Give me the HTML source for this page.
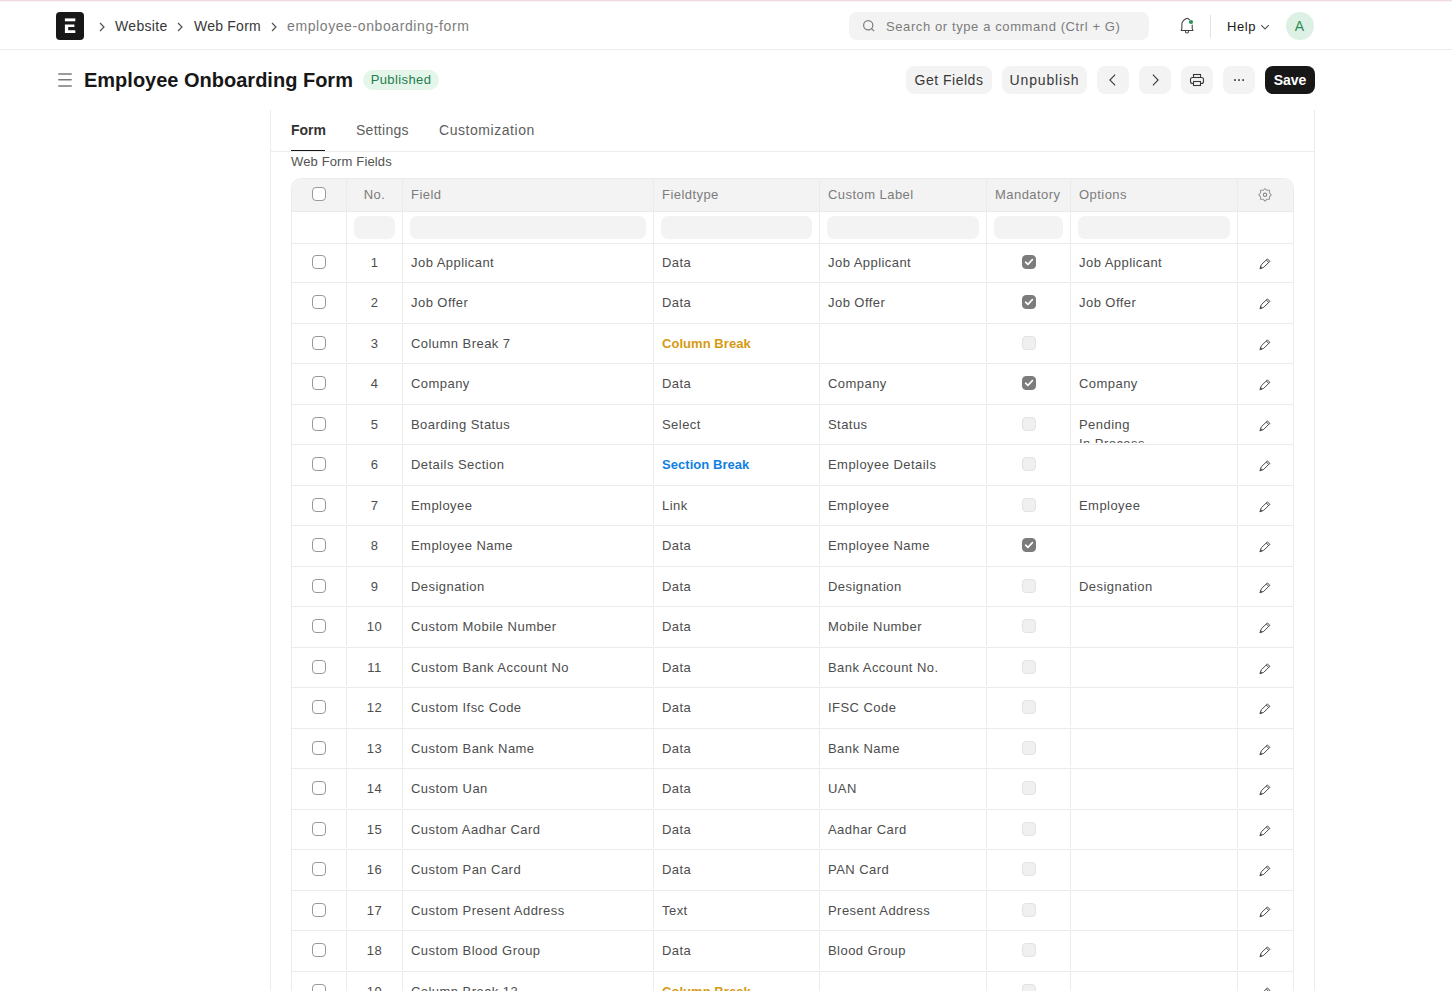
<!DOCTYPE html>
<html><head><meta charset="utf-8"><title>Employee Onboarding Form</title>
<style>
*{box-sizing:border-box;margin:0;padding:0}
html,body{width:1452px;height:991px;overflow:hidden;background:#fff}
body{font-family:"Liberation Sans",sans-serif;color:#383838;position:relative}
.abs{position:absolute}
.topline{position:absolute;left:0;top:0;width:1452px;height:1px;background:#f0dadd}
.topline2{position:absolute;left:0;top:1px;width:1452px;height:1px;background:#fbf4f5}
.navbar{position:absolute;left:0;top:0;width:1452px;height:50px;border-bottom:1px solid #ececec}
.logo{position:absolute;left:56px;top:12px;width:28px;height:28px;background:#171717;border-radius:4px}
.bc{position:absolute;top:17px;font-size:14px;line-height:18px;white-space:nowrap}
.chev{position:absolute}
.search{position:absolute;left:849px;top:12px;width:300px;height:28px;background:#f3f3f3;border-radius:8px}
.search .ph{position:absolute;left:37px;top:7px;font-size:13px;letter-spacing:0.6px;line-height:16px;color:#7c7c7c;white-space:nowrap}
.help{position:absolute;left:1227px;top:18px;font-size:13px;line-height:18px;color:#171717;letter-spacing:0.6px}
.avatar{position:absolute;left:1286px;top:12px;width:28px;height:28px;border-radius:50%;background:#dcf1e3;color:#2e8b57;font-size:14px;line-height:28px;text-align:center;padding-right:1px}
.vdiv{position:absolute;left:1210px;top:15px;width:1px;height:23px;background:#e2e2e2}

.title{position:absolute;left:84px;top:68px;font-size:20px;line-height:24px;font-weight:bold;color:#171717;white-space:nowrap}
.badge{position:absolute;left:363px;top:70px;width:76px;height:20px;border-radius:10px;background:#e4f5e9;color:#1f7d4f;font-size:13px;letter-spacing:0.4px;line-height:20px;text-align:center}
.btn{position:absolute;top:66px;height:28px;border-radius:8px;background:#f3f3f3;color:#383838;font-size:14px;line-height:28px;text-align:center;white-space:nowrap}
.btn.dark{background:#171717;color:#fff;font-weight:bold}

.card{position:absolute;left:270px;top:110px;width:1045px;height:900px;border-left:1px solid #ececec;border-right:1px solid #ececec}
.tabs{position:absolute;left:271px;top:110px;width:1043px;height:42px;border-bottom:1px solid #ececec}
.tab{position:absolute;top:121px;font-size:14px;line-height:18px;color:#5e5e5e;white-space:nowrap}
.tab.active{color:#333;font-weight:bold}
.uline{position:absolute;left:291px;top:150px;width:34px;height:1px;background:#171717}
.secl{position:absolute;left:291px;top:154px;font-size:13px;line-height:16px;color:#525252;white-space:nowrap}

.grid{position:absolute;left:291px;top:178px;width:1003px;border:1px solid #ebebeb;border-radius:10px 10px 0 0;border-bottom:none;}
.ghead{display:flex;height:33px;background:#f3f3f3;border-bottom:1px solid #ebebeb;border-radius:9px 9px 0 0}
.gfilt{display:flex;height:32px;border-bottom:1px solid #ebebeb}
.row{display:flex;border-bottom:1px solid #ebebeb}
.c{position:relative;border-right:1px solid #ebebeb;font-size:13px;letter-spacing:0.45px;white-space:nowrap;overflow:hidden;padding-left:8px}
.c8{border-right:none}
.c1{width:55px}.c2{width:56px}.c3{width:251px}.c4{width:166px}.c5{width:167px}.c6{width:84px}.c7{width:167px}.c8{width:55px}
.ghead .c{color:#7c7c7c;line-height:31px}
.row .c{padding-top:10px;line-height:19px;color:#4d4d4d;height:calc(100% - 1px)}
.num{text-align:center;padding-left:0 !important}
.mid{padding-left:0 !important;text-align:center}
.chk{position:absolute;left:20px;top:12px;width:14px;height:14px;border:1px solid #999;border-radius:4px;background:#fff}
.mchk{position:absolute;left:35px;top:12px;width:14px;height:14px;border-radius:4px;background:#f0f0f0;border:1px solid #e2e2e2}
.mchk.on{background:#7c7c7c;border-color:#7c7c7c}
.mchk svg{position:absolute;left:-1px;top:-1px}
.c8 svg{position:absolute;left:20px;top:13px}
.first .c{padding-top:9px}.first .chk,.first .mchk{top:11px}.first .c8 svg{top:12px}
.cb{color:#d69a12;font-weight:bold;letter-spacing:0.05px}
.sb{color:#0f7fe3;font-weight:bold;letter-spacing:0.05px}
.fin{position:absolute;top:4px;height:23px;border-radius:7px;background:#f3f3f3}

</style></head>
<body>
<div class="navbar"></div>
<div class="topline"></div><div class="topline2"></div>
<div class="logo">
 <svg width="28" height="28" viewBox="0 0 28 28"><rect x="8.9" y="6.4" width="10.4" height="2.9" fill="#fff"/><path d="M8.9 12.4 H18.4 V15.1 H12.2 V18.2 H19.3 V21.1 H8.9 Z" fill="#fff"/></svg>
</div>
<svg class="chev" style="left:98px;top:21px" width="8" height="12" viewBox="0 0 8 12"><path d="M2 2 L6 6 L2 10" fill="none" stroke="#525252" stroke-width="1.2"/></svg>
<div class="bc" style="left:115px;color:#383838;letter-spacing:0.33px">Website</div>
<svg class="chev" style="left:176px;top:21px" width="8" height="12" viewBox="0 0 8 12"><path d="M2 2 L6 6 L2 10" fill="none" stroke="#525252" stroke-width="1.2"/></svg>
<div class="bc" style="left:194px;color:#383838;letter-spacing:0.23px">Web Form</div>
<svg class="chev" style="left:270px;top:21px" width="8" height="12" viewBox="0 0 8 12"><path d="M2 2 L6 6 L2 10" fill="none" stroke="#525252" stroke-width="1.2"/></svg>
<div class="bc" style="left:287px;color:#7c7c7c;letter-spacing:0.6px">employee-onboarding-form</div>

<div class="search">
 <svg style="position:absolute;left:13px;top:7px" width="14" height="14" viewBox="0 0 14 14"><circle cx="6.2" cy="6.2" r="4.6" fill="none" stroke="#7c7c7c" stroke-width="1.2"/><path d="M9.6 9.6 L12.2 12.2" stroke="#7c7c7c" stroke-width="1.2"/></svg>
 <div class="ph">Search or type a command (Ctrl + G)</div>
</div>
<svg style="position:absolute;left:1176px;top:14px" width="24" height="24" viewBox="0 0 24 24"><path d="M5.9 14.4 V9.8 C5.9 8.4 6.6 7.2 7.7 6.3 L10 4.7 C10.7 4.2 11.5 4.2 12.2 4.7 L13.5 5.6 M16.2 11 V14.4 M5.9 14.4 L5.2 16.4 H16.9 L16.2 14.4" fill="none" stroke="#404040" stroke-width="1.05" stroke-linejoin="round" stroke-linecap="round"/><path d="M9.4 16.9 C9.4 19.6 12.6 19.6 12.6 16.9" fill="none" stroke="#404040" stroke-width="1.05"/><circle cx="15" cy="8" r="2.1" fill="#2a9158"/></svg>
<div class="vdiv"></div>
<div class="help">Help</div>
<svg style="position:absolute;left:1260px;top:22px" width="10" height="8" viewBox="0 0 10 8"><path d="M1.2 3.2 L5 7 L8.8 3.2" fill="none" stroke="#555" stroke-width="1.1"/></svg>
<div class="avatar">A</div>

<svg style="position:absolute;left:52px;top:66px" width="28" height="28" viewBox="0 0 28 28"><path d="M6.8 7.9 H19.2 M6.8 13.85 H19.2 M6.8 19.9 H19.2" stroke="#7a7a7a" stroke-width="1.5" stroke-linecap="round"/></svg>
<div class="title">Employee Onboarding Form</div>
<div class="badge">Published</div>

<div class="btn" style="left:906px;width:86px;letter-spacing:0.5px">Get Fields</div>
<div class="btn" style="left:1002px;width:85px;letter-spacing:0.85px">Unpublish</div>
<div class="btn" style="left:1097px;width:32px"><svg style="position:absolute;left:0;top:0" width="32" height="28" viewBox="0 0 32 28"><path d="M18.1 8.7 L12.9 14 L18.1 19.3" fill="none" stroke="#383838" stroke-width="1.1"/></svg></div>
<div class="btn" style="left:1139px;width:32px"><svg style="position:absolute;left:0;top:0" width="32" height="28" viewBox="0 0 32 28"><path d="M13.9 8.7 L19.1 14 L13.9 19.3" fill="none" stroke="#383838" stroke-width="1.1"/></svg></div>
<div class="btn" style="left:1181px;width:32px"><svg style="position:absolute;left:8px;top:7px" width="16" height="14" viewBox="0 0 16 14"><rect x="4.5" y="1.5" width="7" height="3" fill="none" stroke="#383838" stroke-width="1.1"/><rect x="1.5" y="4.5" width="13" height="6" rx="2" fill="none" stroke="#383838" stroke-width="1.1"/><rect x="4.5" y="8.5" width="7" height="4" fill="#f3f3f3" stroke="#383838" stroke-width="1.1"/></svg></div>
<div class="btn" style="left:1223px;width:32px"><svg style="position:absolute;left:9px;top:12px" width="14" height="4" viewBox="0 0 14 4"><rect x="2.1" y="1.2" width="1.7" height="1.7" fill="#383838"/><rect x="6.2" y="1.2" width="1.7" height="1.7" fill="#383838"/><rect x="10.3" y="1.2" width="1.7" height="1.7" fill="#383838"/></svg></div>
<div class="btn dark" style="left:1265px;width:50px">Save</div>

<div class="card"></div>
<div class="tabs"></div>
<div class="tab active" style="left:291px">Form</div>
<div class="tab" style="left:356px;letter-spacing:0.28px">Settings</div>
<div class="tab" style="left:439px;letter-spacing:0.55px">Customization</div>
<div class="uline"></div>
<div class="secl" style="letter-spacing:0.14px">Web Form Fields</div>

<div class="grid">
 <div class="ghead">
  <div class="c c1"><span class="chk" style="top:8px"></span></div>
  <div class="c c2 num">No.</div>
  <div class="c c3">Field</div>
  <div class="c c4">Fieldtype</div>
  <div class="c c5">Custom Label</div>
  <div class="c c6">Mandatory</div>
  <div class="c c7">Options</div>
  <div class="c c8 mid"><svg style="position:absolute;left:20px;top:9px" width="14" height="14" viewBox="0 0 14 14"><path d="M7.00 0.50 L8.80 2.30 L11.50 2.30 L11.50 5.00 L13.30 6.80 L11.50 8.60 L11.50 11.30 L8.80 11.30 L7.00 13.10 L5.20 11.30 L2.50 11.30 L2.50 8.60 L0.70 6.80 L2.50 5.00 L2.50 2.30 L5.20 2.30Z" fill="none" stroke="#999" stroke-width="1.05" stroke-linejoin="round"/><circle cx="7.0" cy="6.8" r="1.7" fill="none" stroke="#8a8a8a" stroke-width="1.1"/></svg></div>
 </div>
 <div class="gfilt">
  <div class="c c1"></div>
  <div class="c c2"><div class="fin" style="left:7px;right:7px"></div></div>
  <div class="c c3"><div class="fin" style="left:7px;right:7px"></div></div>
  <div class="c c4"><div class="fin" style="left:7px;right:7px"></div></div>
  <div class="c c5"><div class="fin" style="left:7px;right:7px"></div></div>
  <div class="c c6"><div class="fin" style="left:7px;right:7px"></div></div>
  <div class="c c7"><div class="fin" style="left:7px;right:7px"></div></div>
  <div class="c c8"></div>
 </div>
<div class="row first" style="height:39px">
<div class="c c1"><span class="chk"></span></div>
<div class="c c2 num">1</div>
<div class="c c3">Job Applicant</div>
<div class="c c4">Data</div>
<div class="c c5">Job Applicant</div>
<div class="c c6 mid"><span class="mchk on"><svg width="14" height="14" viewBox="0 0 14 14"><path d="M3.6 7.2 L5.9 9.4 L10.4 4.6" fill="none" stroke="#fff" stroke-width="1.6" stroke-linecap="round" stroke-linejoin="round"/></svg></span></div>
<div class="c c7">Job Applicant</div>
<div class="c c8 mid"><svg width="14" height="14" viewBox="0 0 14 14"><path d="M1.9 12.8 L3.3 8.8 L9.4 2.9 L11.8 5.3 L5.8 11.3 Z M8.3 4 L10.7 6.4" fill="none" stroke="#4a4a4a" stroke-width="1" stroke-linejoin="round"/><path d="M1.9 12.8 L2.6 10.3 L4.4 12.1 Z" fill="#4a4a4a"/></svg></div>
</div>
<div class="row" style="height:41px">
<div class="c c1"><span class="chk"></span></div>
<div class="c c2 num">2</div>
<div class="c c3">Job Offer</div>
<div class="c c4">Data</div>
<div class="c c5">Job Offer</div>
<div class="c c6 mid"><span class="mchk on"><svg width="14" height="14" viewBox="0 0 14 14"><path d="M3.6 7.2 L5.9 9.4 L10.4 4.6" fill="none" stroke="#fff" stroke-width="1.6" stroke-linecap="round" stroke-linejoin="round"/></svg></span></div>
<div class="c c7">Job Offer</div>
<div class="c c8 mid"><svg width="14" height="14" viewBox="0 0 14 14"><path d="M1.9 12.8 L3.3 8.8 L9.4 2.9 L11.8 5.3 L5.8 11.3 Z M8.3 4 L10.7 6.4" fill="none" stroke="#4a4a4a" stroke-width="1" stroke-linejoin="round"/><path d="M1.9 12.8 L2.6 10.3 L4.4 12.1 Z" fill="#4a4a4a"/></svg></div>
</div>
<div class="row" style="height:40px">
<div class="c c1"><span class="chk"></span></div>
<div class="c c2 num">3</div>
<div class="c c3">Column Break 7</div>
<div class="c c4"><span class="cb">Column Break</span></div>
<div class="c c5"></div>
<div class="c c6 mid"><span class="mchk"></span></div>
<div class="c c7"></div>
<div class="c c8 mid"><svg width="14" height="14" viewBox="0 0 14 14"><path d="M1.9 12.8 L3.3 8.8 L9.4 2.9 L11.8 5.3 L5.8 11.3 Z M8.3 4 L10.7 6.4" fill="none" stroke="#4a4a4a" stroke-width="1" stroke-linejoin="round"/><path d="M1.9 12.8 L2.6 10.3 L4.4 12.1 Z" fill="#4a4a4a"/></svg></div>
</div>
<div class="row" style="height:41px">
<div class="c c1"><span class="chk"></span></div>
<div class="c c2 num">4</div>
<div class="c c3">Company</div>
<div class="c c4">Data</div>
<div class="c c5">Company</div>
<div class="c c6 mid"><span class="mchk on"><svg width="14" height="14" viewBox="0 0 14 14"><path d="M3.6 7.2 L5.9 9.4 L10.4 4.6" fill="none" stroke="#fff" stroke-width="1.6" stroke-linecap="round" stroke-linejoin="round"/></svg></span></div>
<div class="c c7">Company</div>
<div class="c c8 mid"><svg width="14" height="14" viewBox="0 0 14 14"><path d="M1.9 12.8 L3.3 8.8 L9.4 2.9 L11.8 5.3 L5.8 11.3 Z M8.3 4 L10.7 6.4" fill="none" stroke="#4a4a4a" stroke-width="1" stroke-linejoin="round"/><path d="M1.9 12.8 L2.6 10.3 L4.4 12.1 Z" fill="#4a4a4a"/></svg></div>
</div>
<div class="row" style="height:40px">
<div class="c c1"><span class="chk"></span></div>
<div class="c c2 num">5</div>
<div class="c c3">Boarding Status</div>
<div class="c c4">Select</div>
<div class="c c5">Status</div>
<div class="c c6 mid"><span class="mchk"></span></div>
<div class="c c7">Pending<br>In Process</div>
<div class="c c8 mid"><svg width="14" height="14" viewBox="0 0 14 14"><path d="M1.9 12.8 L3.3 8.8 L9.4 2.9 L11.8 5.3 L5.8 11.3 Z M8.3 4 L10.7 6.4" fill="none" stroke="#4a4a4a" stroke-width="1" stroke-linejoin="round"/><path d="M1.9 12.8 L2.6 10.3 L4.4 12.1 Z" fill="#4a4a4a"/></svg></div>
</div>
<div class="row" style="height:41px">
<div class="c c1"><span class="chk"></span></div>
<div class="c c2 num">6</div>
<div class="c c3">Details Section</div>
<div class="c c4"><span class="sb">Section Break</span></div>
<div class="c c5">Employee Details</div>
<div class="c c6 mid"><span class="mchk"></span></div>
<div class="c c7"></div>
<div class="c c8 mid"><svg width="14" height="14" viewBox="0 0 14 14"><path d="M1.9 12.8 L3.3 8.8 L9.4 2.9 L11.8 5.3 L5.8 11.3 Z M8.3 4 L10.7 6.4" fill="none" stroke="#4a4a4a" stroke-width="1" stroke-linejoin="round"/><path d="M1.9 12.8 L2.6 10.3 L4.4 12.1 Z" fill="#4a4a4a"/></svg></div>
</div>
<div class="row" style="height:40px">
<div class="c c1"><span class="chk"></span></div>
<div class="c c2 num">7</div>
<div class="c c3">Employee</div>
<div class="c c4">Link</div>
<div class="c c5">Employee</div>
<div class="c c6 mid"><span class="mchk"></span></div>
<div class="c c7">Employee</div>
<div class="c c8 mid"><svg width="14" height="14" viewBox="0 0 14 14"><path d="M1.9 12.8 L3.3 8.8 L9.4 2.9 L11.8 5.3 L5.8 11.3 Z M8.3 4 L10.7 6.4" fill="none" stroke="#4a4a4a" stroke-width="1" stroke-linejoin="round"/><path d="M1.9 12.8 L2.6 10.3 L4.4 12.1 Z" fill="#4a4a4a"/></svg></div>
</div>
<div class="row" style="height:41px">
<div class="c c1"><span class="chk"></span></div>
<div class="c c2 num">8</div>
<div class="c c3">Employee Name</div>
<div class="c c4">Data</div>
<div class="c c5">Employee Name</div>
<div class="c c6 mid"><span class="mchk on"><svg width="14" height="14" viewBox="0 0 14 14"><path d="M3.6 7.2 L5.9 9.4 L10.4 4.6" fill="none" stroke="#fff" stroke-width="1.6" stroke-linecap="round" stroke-linejoin="round"/></svg></span></div>
<div class="c c7"></div>
<div class="c c8 mid"><svg width="14" height="14" viewBox="0 0 14 14"><path d="M1.9 12.8 L3.3 8.8 L9.4 2.9 L11.8 5.3 L5.8 11.3 Z M8.3 4 L10.7 6.4" fill="none" stroke="#4a4a4a" stroke-width="1" stroke-linejoin="round"/><path d="M1.9 12.8 L2.6 10.3 L4.4 12.1 Z" fill="#4a4a4a"/></svg></div>
</div>
<div class="row" style="height:40px">
<div class="c c1"><span class="chk"></span></div>
<div class="c c2 num">9</div>
<div class="c c3">Designation</div>
<div class="c c4">Data</div>
<div class="c c5">Designation</div>
<div class="c c6 mid"><span class="mchk"></span></div>
<div class="c c7">Designation</div>
<div class="c c8 mid"><svg width="14" height="14" viewBox="0 0 14 14"><path d="M1.9 12.8 L3.3 8.8 L9.4 2.9 L11.8 5.3 L5.8 11.3 Z M8.3 4 L10.7 6.4" fill="none" stroke="#4a4a4a" stroke-width="1" stroke-linejoin="round"/><path d="M1.9 12.8 L2.6 10.3 L4.4 12.1 Z" fill="#4a4a4a"/></svg></div>
</div>
<div class="row" style="height:41px">
<div class="c c1"><span class="chk"></span></div>
<div class="c c2 num">10</div>
<div class="c c3">Custom Mobile Number</div>
<div class="c c4">Data</div>
<div class="c c5">Mobile Number</div>
<div class="c c6 mid"><span class="mchk"></span></div>
<div class="c c7"></div>
<div class="c c8 mid"><svg width="14" height="14" viewBox="0 0 14 14"><path d="M1.9 12.8 L3.3 8.8 L9.4 2.9 L11.8 5.3 L5.8 11.3 Z M8.3 4 L10.7 6.4" fill="none" stroke="#4a4a4a" stroke-width="1" stroke-linejoin="round"/><path d="M1.9 12.8 L2.6 10.3 L4.4 12.1 Z" fill="#4a4a4a"/></svg></div>
</div>
<div class="row" style="height:40px">
<div class="c c1"><span class="chk"></span></div>
<div class="c c2 num">11</div>
<div class="c c3">Custom Bank Account No</div>
<div class="c c4">Data</div>
<div class="c c5">Bank Account No.</div>
<div class="c c6 mid"><span class="mchk"></span></div>
<div class="c c7"></div>
<div class="c c8 mid"><svg width="14" height="14" viewBox="0 0 14 14"><path d="M1.9 12.8 L3.3 8.8 L9.4 2.9 L11.8 5.3 L5.8 11.3 Z M8.3 4 L10.7 6.4" fill="none" stroke="#4a4a4a" stroke-width="1" stroke-linejoin="round"/><path d="M1.9 12.8 L2.6 10.3 L4.4 12.1 Z" fill="#4a4a4a"/></svg></div>
</div>
<div class="row" style="height:41px">
<div class="c c1"><span class="chk"></span></div>
<div class="c c2 num">12</div>
<div class="c c3">Custom Ifsc Code</div>
<div class="c c4">Data</div>
<div class="c c5">IFSC Code</div>
<div class="c c6 mid"><span class="mchk"></span></div>
<div class="c c7"></div>
<div class="c c8 mid"><svg width="14" height="14" viewBox="0 0 14 14"><path d="M1.9 12.8 L3.3 8.8 L9.4 2.9 L11.8 5.3 L5.8 11.3 Z M8.3 4 L10.7 6.4" fill="none" stroke="#4a4a4a" stroke-width="1" stroke-linejoin="round"/><path d="M1.9 12.8 L2.6 10.3 L4.4 12.1 Z" fill="#4a4a4a"/></svg></div>
</div>
<div class="row" style="height:40px">
<div class="c c1"><span class="chk"></span></div>
<div class="c c2 num">13</div>
<div class="c c3">Custom Bank Name</div>
<div class="c c4">Data</div>
<div class="c c5">Bank Name</div>
<div class="c c6 mid"><span class="mchk"></span></div>
<div class="c c7"></div>
<div class="c c8 mid"><svg width="14" height="14" viewBox="0 0 14 14"><path d="M1.9 12.8 L3.3 8.8 L9.4 2.9 L11.8 5.3 L5.8 11.3 Z M8.3 4 L10.7 6.4" fill="none" stroke="#4a4a4a" stroke-width="1" stroke-linejoin="round"/><path d="M1.9 12.8 L2.6 10.3 L4.4 12.1 Z" fill="#4a4a4a"/></svg></div>
</div>
<div class="row" style="height:41px">
<div class="c c1"><span class="chk"></span></div>
<div class="c c2 num">14</div>
<div class="c c3">Custom Uan</div>
<div class="c c4">Data</div>
<div class="c c5">UAN</div>
<div class="c c6 mid"><span class="mchk"></span></div>
<div class="c c7"></div>
<div class="c c8 mid"><svg width="14" height="14" viewBox="0 0 14 14"><path d="M1.9 12.8 L3.3 8.8 L9.4 2.9 L11.8 5.3 L5.8 11.3 Z M8.3 4 L10.7 6.4" fill="none" stroke="#4a4a4a" stroke-width="1" stroke-linejoin="round"/><path d="M1.9 12.8 L2.6 10.3 L4.4 12.1 Z" fill="#4a4a4a"/></svg></div>
</div>
<div class="row" style="height:40px">
<div class="c c1"><span class="chk"></span></div>
<div class="c c2 num">15</div>
<div class="c c3">Custom Aadhar Card</div>
<div class="c c4">Data</div>
<div class="c c5">Aadhar Card</div>
<div class="c c6 mid"><span class="mchk"></span></div>
<div class="c c7"></div>
<div class="c c8 mid"><svg width="14" height="14" viewBox="0 0 14 14"><path d="M1.9 12.8 L3.3 8.8 L9.4 2.9 L11.8 5.3 L5.8 11.3 Z M8.3 4 L10.7 6.4" fill="none" stroke="#4a4a4a" stroke-width="1" stroke-linejoin="round"/><path d="M1.9 12.8 L2.6 10.3 L4.4 12.1 Z" fill="#4a4a4a"/></svg></div>
</div>
<div class="row" style="height:41px">
<div class="c c1"><span class="chk"></span></div>
<div class="c c2 num">16</div>
<div class="c c3">Custom Pan Card</div>
<div class="c c4">Data</div>
<div class="c c5">PAN Card</div>
<div class="c c6 mid"><span class="mchk"></span></div>
<div class="c c7"></div>
<div class="c c8 mid"><svg width="14" height="14" viewBox="0 0 14 14"><path d="M1.9 12.8 L3.3 8.8 L9.4 2.9 L11.8 5.3 L5.8 11.3 Z M8.3 4 L10.7 6.4" fill="none" stroke="#4a4a4a" stroke-width="1" stroke-linejoin="round"/><path d="M1.9 12.8 L2.6 10.3 L4.4 12.1 Z" fill="#4a4a4a"/></svg></div>
</div>
<div class="row" style="height:40px">
<div class="c c1"><span class="chk"></span></div>
<div class="c c2 num">17</div>
<div class="c c3">Custom Present Address</div>
<div class="c c4">Text</div>
<div class="c c5">Present Address</div>
<div class="c c6 mid"><span class="mchk"></span></div>
<div class="c c7"></div>
<div class="c c8 mid"><svg width="14" height="14" viewBox="0 0 14 14"><path d="M1.9 12.8 L3.3 8.8 L9.4 2.9 L11.8 5.3 L5.8 11.3 Z M8.3 4 L10.7 6.4" fill="none" stroke="#4a4a4a" stroke-width="1" stroke-linejoin="round"/><path d="M1.9 12.8 L2.6 10.3 L4.4 12.1 Z" fill="#4a4a4a"/></svg></div>
</div>
<div class="row" style="height:41px">
<div class="c c1"><span class="chk"></span></div>
<div class="c c2 num">18</div>
<div class="c c3">Custom Blood Group</div>
<div class="c c4">Data</div>
<div class="c c5">Blood Group</div>
<div class="c c6 mid"><span class="mchk"></span></div>
<div class="c c7"></div>
<div class="c c8 mid"><svg width="14" height="14" viewBox="0 0 14 14"><path d="M1.9 12.8 L3.3 8.8 L9.4 2.9 L11.8 5.3 L5.8 11.3 Z M8.3 4 L10.7 6.4" fill="none" stroke="#4a4a4a" stroke-width="1" stroke-linejoin="round"/><path d="M1.9 12.8 L2.6 10.3 L4.4 12.1 Z" fill="#4a4a4a"/></svg></div>
</div>
<div class="row" style="height:40px">
<div class="c c1"><span class="chk"></span></div>
<div class="c c2 num">19</div>
<div class="c c3">Column Break 13</div>
<div class="c c4"><span class="cb">Column Break</span></div>
<div class="c c5"></div>
<div class="c c6 mid"><span class="mchk"></span></div>
<div class="c c7"></div>
<div class="c c8 mid"><svg width="14" height="14" viewBox="0 0 14 14"><path d="M1.9 12.8 L3.3 8.8 L9.4 2.9 L11.8 5.3 L5.8 11.3 Z M8.3 4 L10.7 6.4" fill="none" stroke="#4a4a4a" stroke-width="1" stroke-linejoin="round"/><path d="M1.9 12.8 L2.6 10.3 L4.4 12.1 Z" fill="#4a4a4a"/></svg></div>
</div>
</div>

</body></html>
